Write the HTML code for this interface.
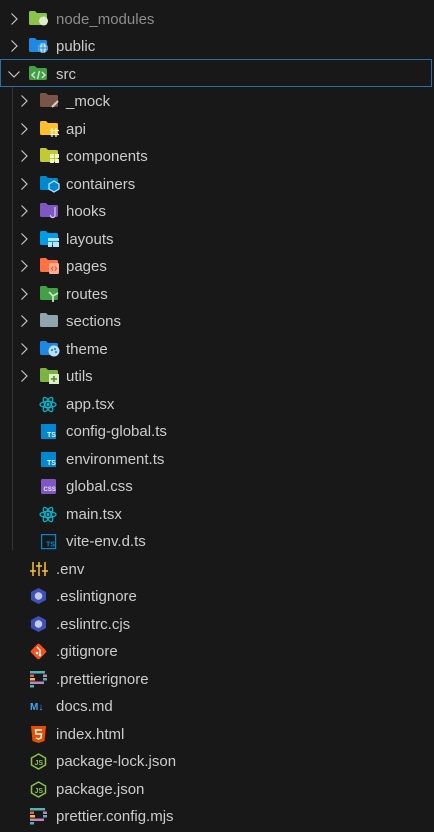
<!DOCTYPE html>
<html><head><meta charset="utf-8"><style>
html,body{margin:0;padding:0;background:#181818;width:434px;height:831px;overflow:hidden;font-family:"Liberation Sans",sans-serif;}
#w{position:absolute;left:0;top:1px;width:434px;height:831px;}
.r{position:absolute;left:0;width:434px;height:27px;color:#cccccc;font-size:15px;}
.r span{position:absolute;top:5px;white-space:nowrap;}
.r svg{position:absolute;}
.ch{position:absolute;}
</style></head><body>
<div style="position:absolute;left:0;top:59px;width:430px;height:26px;border:1px solid #2b6fa8;"></div>
<div style="position:absolute;left:12px;top:87px;width:1px;height:463px;background:#333;"></div>
<svg width="0" height="0" style="position:absolute">
<defs>
<path id="fold" d="M0 1.5Q0 0 1.5 0H6L8 2H16.5Q18 2 18 3.5V12.5Q18 14 16.5 14H1.5Q0 14 0 12.5Z"/>
<path id="chr" d="M0.5 0.5L6 6L0.5 11.5" fill="none" stroke="#c5c5c5" stroke-width="1.2"/>
<path id="chd" d="M0.5 0.5L6 6L11.5 0.5" fill="none" stroke="#c5c5c5" stroke-width="1.2"/>
</defs></svg>
<div id="w">
<!-- node_modules -->
<div class="r" style="top:5px">
<svg class="ch" style="left:11px;top:7px" width="8" height="13"><use href="#chr"/></svg>
<svg style="left:29px;top:5px" width="20" height="17"><use href="#fold" fill="#8bc34a"/><circle cx="14.5" cy="10" r="4.5" fill="#dcedc8"/></svg>
<span style="left:56px;color:#8c8c8c">node_modules</span></div>
<!-- public -->
<div class="r" style="top:32px">
<svg class="ch" style="left:11px;top:7px" width="8" height="13"><use href="#chr"/></svg>
<svg style="left:29px;top:5px" width="20" height="17"><use href="#fold" fill="#1e88e5"/><circle cx="14" cy="10" r="5" fill="#bbdefb"/><path d="M9 10h10M14 5v10M11.5 6c-2 3-2 5 0 8M16.5 6c2 3 2 5 0 8" stroke="#1e88e5" stroke-width="0.9" fill="none"/></svg>
<span style="left:56px">public</span></div>
<!-- src -->
<div class="r" style="top:60px">
<svg class="ch" style="left:8px;top:10px" width="13" height="8"><use href="#chd"/></svg>
<svg style="left:29px;top:5px" width="20" height="17"><use href="#fold" fill="#43a047"/><path d="M6 6L3 9L6 12M13 6L16 9L13 12M10.5 5L8.5 13" stroke="#c8e6c9" stroke-width="1.5" fill="none"/></svg>
<span style="left:56px">src</span></div>

<!-- level1 folders -->
<div class="r" style="top:87px"><svg class="ch" style="left:21px;top:7px" width="8" height="13"><use href="#chr"/></svg>
<svg style="left:40px;top:5px" width="20" height="17"><use href="#fold" fill="#795548"/><path d="M12 14L18 8" stroke="#d7ccc8" stroke-width="2"/></svg><span style="left:66px">_mock</span></div>
<div class="r" style="top:115px"><svg class="ch" style="left:21px;top:7px" width="8" height="13"><use href="#chr"/></svg>
<svg style="left:40px;top:5px" width="20" height="17"><use href="#fold" fill="#fbc02d"/><path d="M12 7v9M16 7v9M10 9.5h9M10 13.5h9" stroke="#fff3c4" stroke-width="1.3"/></svg><span style="left:66px">api</span></div>
<div class="r" style="top:142px"><svg class="ch" style="left:21px;top:7px" width="8" height="13"><use href="#chr"/></svg>
<svg style="left:40px;top:5px" width="20" height="17"><use href="#fold" fill="#c0ca33"/><rect x="10" y="6" width="4" height="4" fill="#f0f4c3"/><rect x="15" y="6" width="4" height="4" fill="#f0f4c3"/><rect x="10" y="11" width="4" height="4" fill="#f0f4c3"/><rect x="15" y="11" width="4" height="4" fill="#f0f4c3"/></svg><span style="left:66px">components</span></div>
<div class="r" style="top:170px"><svg class="ch" style="left:21px;top:7px" width="8" height="13"><use href="#chr"/></svg>
<svg style="left:40px;top:5px" width="20" height="17"><use href="#fold" fill="#0288d1"/><path d="M14 5L19 8V13L14 16L9 13V8Z" fill="#0288d1" stroke="#b3e5fc" stroke-width="1.3"/></svg><span style="left:66px">containers</span></div>
<div class="r" style="top:197px"><svg class="ch" style="left:21px;top:7px" width="8" height="13"><use href="#chr"/></svg>
<svg style="left:40px;top:5px" width="20" height="17"><use href="#fold" fill="#7e57c2"/><path d="M15 4V12Q15 14.5 12.5 14.5Q10.5 14.5 10.5 12" fill="none" stroke="#d1c4e9" stroke-width="1.3"/></svg><span style="left:66px">hooks</span></div>
<div class="r" style="top:225px"><svg class="ch" style="left:21px;top:7px" width="8" height="13"><use href="#chr"/></svg>
<svg style="left:40px;top:5px" width="20" height="17"><use href="#fold" fill="#039be5"/><rect x="8" y="7" width="11" height="3" fill="#b3e5fc"/><rect x="8" y="11" width="4" height="5" fill="#b3e5fc"/><rect x="13" y="11" width="6" height="5" fill="#b3e5fc"/></svg><span style="left:66px">layouts</span></div>
<div class="r" style="top:252px"><svg class="ch" style="left:21px;top:7px" width="8" height="13"><use href="#chr"/></svg>
<svg style="left:40px;top:5px" width="20" height="17"><use href="#fold" fill="#ff7043"/><rect x="9" y="5" width="10" height="11" rx="1.5" fill="#ffab91"/><path d="M13 8.5L11.5 10.5L13 12.5M15 8.5L16.5 10.5L15 12.5" stroke="#e64a19" fill="none"/></svg><span style="left:66px">pages</span></div>
<div class="r" style="top:280px"><svg class="ch" style="left:21px;top:7px" width="8" height="13"><use href="#chr"/></svg>
<svg style="left:40px;top:5px" width="20" height="17"><use href="#fold" fill="#43a047"/><path d="M9 6L13 10V16M13 10L18 7" stroke="#c8e6c9" stroke-width="1.8" fill="none"/></svg><span style="left:66px">routes</span></div>
<div class="r" style="top:307px"><svg class="ch" style="left:21px;top:7px" width="8" height="13"><use href="#chr"/></svg>
<svg style="left:40px;top:5px" width="20" height="17"><use href="#fold" fill="#90a4ae"/></svg><span style="left:66px">sections</span></div>
<div class="r" style="top:335px"><svg class="ch" style="left:21px;top:7px" width="8" height="13"><use href="#chr"/></svg>
<svg style="left:40px;top:5px" width="20" height="17"><use href="#fold" fill="#1e88e5"/><circle cx="14" cy="10" r="5.5" fill="#bbdefb"/><circle cx="12" cy="9" r="1.1" fill="#1e88e5"/><circle cx="15" cy="8" r="1.1" fill="#1e88e5"/><circle cx="16" cy="11" r="1.1" fill="#1e88e5"/></svg><span style="left:66px">theme</span></div>
<div class="r" style="top:362px"><svg class="ch" style="left:21px;top:7px" width="8" height="13"><use href="#chr"/></svg>
<svg style="left:40px;top:5px" width="20" height="17"><use href="#fold" fill="#7cb342"/><rect x="9" y="6" width="10" height="10" fill="#dcedc8"/><path d="M14 8v6M11 11h6" stroke="#558b2f" stroke-width="1.6"/></svg><span style="left:66px">utils</span></div>

<!-- level1 files -->
<div class="r" style="top:390px"><svg style="left:39px;top:5px" width="18" height="17" viewBox="0 0 18 17"><g fill="none" stroke="#00bcd4" stroke-width="1.2"><ellipse cx="9" cy="8.5" rx="8" ry="3"/><ellipse cx="9" cy="8.5" rx="8" ry="3" transform="rotate(60 9 8.5)"/><ellipse cx="9" cy="8.5" rx="8" ry="3" transform="rotate(-60 9 8.5)"/></g><circle cx="9" cy="8.5" r="1.5" fill="#00bcd4"/></svg><span style="left:66px">app.tsx</span></div>
<div class="r" style="top:417px"><svg style="left:41px;top:6px" width="16" height="16"><rect width="15" height="15" fill="#0288d1"/><text x="6" y="13" font-size="7" font-family="Liberation Sans" font-weight="bold" fill="#e1f5fe">TS</text></svg><span style="left:66px">config-global.ts</span></div>
<div class="r" style="top:445px"><svg style="left:41px;top:6px" width="16" height="16"><rect width="15" height="15" fill="#0288d1"/><text x="6" y="13" font-size="7" font-family="Liberation Sans" font-weight="bold" fill="#e1f5fe">TS</text></svg><span style="left:66px">environment.ts</span></div>
<div class="r" style="top:472px"><svg style="left:41px;top:6px" width="16" height="16"><rect width="15" height="15" rx="1.5" fill="#7e57c2"/><text x="2.5" y="12" font-size="6" font-family="Liberation Sans" font-weight="bold" fill="#ede7f6">CSS</text></svg><span style="left:66px">global.css</span></div>
<div class="r" style="top:500px"><svg style="left:39px;top:5px" width="18" height="17" viewBox="0 0 18 17"><g fill="none" stroke="#00bcd4" stroke-width="1.2"><ellipse cx="9" cy="8.5" rx="8" ry="3"/><ellipse cx="9" cy="8.5" rx="8" ry="3" transform="rotate(60 9 8.5)"/><ellipse cx="9" cy="8.5" rx="8" ry="3" transform="rotate(-60 9 8.5)"/></g><circle cx="9" cy="8.5" r="1.5" fill="#00bcd4"/></svg><span style="left:66px">main.tsx</span></div>
<div class="r" style="top:527px"><svg style="left:41px;top:6px" width="16" height="16"><rect x="0.6" y="0.6" width="14" height="14" fill="none" stroke="#0288d1" stroke-width="1.2"/><text x="5" y="12.5" font-size="7" font-family="Liberation Sans" font-weight="bold" fill="#0288d1">TS</text></svg><span style="left:66px">vite-env.d.ts</span></div>

<!-- root files -->
<div class="r" style="top:555px"><svg style="left:30px;top:5px" width="18" height="16"><g stroke="#fbc02d" stroke-width="1.5"><path d="M3 1v14M9 1v14M15 1v14"/><path d="M0 10h6M6 5h6M12 10h6"/></g></svg><span style="left:56px">.env</span></div>
<div class="r" style="top:582px"><svg style="left:30px;top:5px" width="17" height="16"><path d="M8.5 0L16 4V12L8.5 16L1 12V4Z" fill="#3f51b5"/><circle cx="8.5" cy="8" r="3.8" fill="#c5cae9"/></svg><span style="left:56px">.eslintignore</span></div>
<div class="r" style="top:610px"><svg style="left:30px;top:5px" width="17" height="16"><path d="M8.5 0L16 4V12L8.5 16L1 12V4Z" fill="#3f51b5"/><circle cx="8.5" cy="8" r="3.8" fill="#c5cae9"/></svg><span style="left:56px">.eslintrc.cjs</span></div>
<div class="r" style="top:637px"><svg style="left:30px;top:5px" width="17" height="17"><rect x="2.5" y="2.5" width="12" height="12" rx="2" transform="rotate(45 8.5 8.5)" fill="#f4511e"/><path d="M7 4L10 7V12" stroke="#fff" stroke-width="1.3" fill="none"/><circle cx="10" cy="12" r="1.3" fill="#fff"/><circle cx="7" cy="10" r="1.3" fill="#fff"/></svg><span style="left:56px">.gitignore</span></div>
<div class="r" style="top:665px"><svg style="left:30px;top:5px" width="18" height="18"><rect x="0" y="0" width="15" height="2.5" fill="#56b3b4"/><rect x="0" y="3.5" width="4" height="2.5" fill="#ea5e5e"/><rect x="13" y="3.5" width="4" height="2.5" fill="#bf85bf"/><rect x="0" y="7" width="5" height="2.5" fill="#f7ba3e"/><rect x="13" y="7" width="4" height="2.5" fill="#56b3b4"/><rect x="0" y="10.5" width="14" height="2.5" fill="#bf85bf"/><rect x="0" y="14" width="4" height="2.5" fill="#56b3b4"/></svg><span style="left:56px">.prettierignore</span></div>
<div class="r" style="top:692px"><svg style="left:30px;top:7px" width="20" height="12"><text x="0" y="10" font-size="10" font-weight="bold" font-family="Liberation Sans" fill="#42a5f5">M↓</text></svg><span style="left:56px">docs.md</span></div>
<div class="r" style="top:720px"><svg style="left:31px;top:5px" width="15" height="17"><path d="M0 0H15L13.5 15L7.5 17L1.5 15Z" fill="#e65100"/><path d="M11 4H4.5L5 8H10.5L10 12L7.5 13L5 12" stroke="#fff" stroke-width="1.4" fill="none"/></svg><span style="left:56px">index.html</span></div>
<div class="r" style="top:747px"><svg style="left:30px;top:5px" width="17" height="17"><path d="M8.5 1L15.5 5V12L8.5 16L1.5 12V5Z" fill="none" stroke="#8bc34a" stroke-width="1.5"/><text x="4.5" y="12" font-size="7" font-family="Liberation Sans" font-weight="bold" fill="#8bc34a">JS</text></svg><span style="left:56px">package-lock.json</span></div>
<div class="r" style="top:775px"><svg style="left:30px;top:5px" width="17" height="17"><path d="M8.5 1L15.5 5V12L8.5 16L1.5 12V5Z" fill="none" stroke="#8bc34a" stroke-width="1.5"/><text x="4.5" y="12" font-size="7" font-family="Liberation Sans" font-weight="bold" fill="#8bc34a">JS</text></svg><span style="left:56px">package.json</span></div>
<div class="r" style="top:802px"><svg style="left:30px;top:5px" width="18" height="18"><rect x="0" y="0" width="15" height="2.5" fill="#56b3b4"/><rect x="0" y="3.5" width="4" height="2.5" fill="#ea5e5e"/><rect x="13" y="3.5" width="4" height="2.5" fill="#bf85bf"/><rect x="0" y="7" width="5" height="2.5" fill="#f7ba3e"/><rect x="13" y="7" width="4" height="2.5" fill="#56b3b4"/><rect x="0" y="10.5" width="14" height="2.5" fill="#bf85bf"/><rect x="0" y="14" width="4" height="2.5" fill="#56b3b4"/></svg><span style="left:56px">prettier.config.mjs</span></div>
</div>
</body></html>
